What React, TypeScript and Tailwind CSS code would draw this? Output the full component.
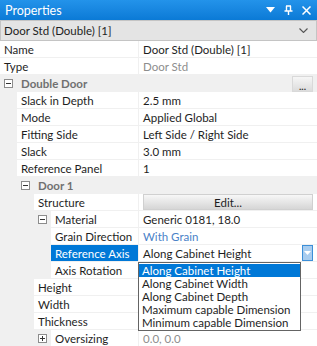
import React from "react";

type Row = {
  label: string;
  value?: string;
  indent: number; // grey margin width in px
  box?: "minus" | "plus";
  kind?: "category" | "selected" | "edit";
  valueTone?: "muted" | "link";
};

const rows: Row[] = [
  { label: "Name", value: "Door Std (Double) [1]", indent: 0 },
  { label: "Type", value: "Door Std", indent: 0, valueTone: "muted" },
  { label: "Double Door", indent: 0, box: "minus", kind: "category" },
  { label: "Slack in Depth", value: "2.5 mm", indent: 17 },
  { label: "Mode", value: "Applied Global", indent: 17 },
  { label: "Fitting Side", value: "Left Side / Right Side", indent: 17 },
  { label: "Slack", value: "3.0 mm", indent: 17 },
  { label: "Reference Panel", value: "1", indent: 17 },
  { label: "Door 1", indent: 17, box: "minus", kind: "category" },
  { label: "Structure", indent: 34, kind: "edit" },
  { label: "Material", value: "Generic 0181, 18.0", indent: 51, box: "minus" },
  { label: "Grain Direction", value: "With Grain", indent: 51, valueTone: "link" },
  { label: "Reference Axis", value: "Along Cabinet Height", indent: 51, kind: "selected" },
  { label: "Axis Rotation", value: "", indent: 51 },
  { label: "Height", value: "", indent: 34 },
  { label: "Width", value: "", indent: 34 },
  { label: "Thickness", value: "", indent: 34 },
  { label: "Oversizing", value: "0.0, 0.0", indent: 51, box: "plus", valueTone: "muted" },
];

const options = [
  "Along Cabinet Height",
  "Along Cabinet Width",
  "Along Cabinet Depth",
  "Maximum capable Dimension",
  "Minimum capable Dimension",
];

function ToggleBox({ type }: { type: "minus" | "plus" }) {
  return (
    <span className="relative flex h-[9px] w-[9px] items-center justify-center border border-[#8c8c8c] bg-white">
      <span className="absolute h-px w-[5px] bg-[#333]" />
      {type === "plus" && <span className="absolute h-[5px] w-px bg-[#333]" />}
    </span>
  );
}

function PropRow({ row }: { row: Row }) {
  if (row.kind === "category") {
    return (
      <div className="flex h-[17px] items-center bg-[#f0f0f0]">
        <div className="flex w-[17px] shrink-0 justify-center" style={{ marginLeft: row.indent }}>
          <ToggleBox type={row.box!} />
        </div>
        <span className="pl-1 font-bold text-[#707070]">{row.label}</span>
        {row.label === "Double Door" && (
          <div className="ml-auto mr-[4px] flex h-[16px] w-[21px] items-end justify-center border border-[#d9d9d9] bg-gradient-to-b from-[#f6f6f6] to-[#dcdcdc] pb-[1px] text-[10px] leading-[8px] font-bold text-[#333]">
            ...
          </div>
        )}
      </div>
    );
  }

  const selected = row.kind === "selected";
  const labelWidth = 138 - row.indent;

  return (
    <div className="flex h-[17px] bg-[#f0f0f0]">
      <div className="flex shrink-0 items-center justify-end" style={{ width: row.indent }}>
        {row.box && (
          <div className="flex w-[17px] justify-center">
            <ToggleBox type={row.box} />
          </div>
        )}
      </div>
      <div
        className={`flex shrink-0 items-center overflow-hidden border-b border-[#f0f0f0] pl-1 ${
          selected ? "bg-[#0078d7] text-white" : "bg-white text-[#1e1e1e]"
        }`}
        style={{ width: labelWidth }}
      >
        {row.label}
      </div>
      <div className="w-px shrink-0 bg-[#f0f0f0]" />
      <div className="flex min-w-0 flex-1 items-center border-b border-[#f0f0f0] bg-white pl-1">
        {row.kind === "edit" ? (
          <div className="mr-[4px] flex h-[16px] flex-1 items-center justify-center border border-[#d0d0d0] bg-gradient-to-b from-[#f7f7f7] to-[#d6d6d6] text-[#1e1e1e]">
            Edit...
          </div>
        ) : (
          <span
            className={
              row.valueTone === "muted"
                ? "text-[#8d8d8d]"
                : row.valueTone === "link"
                ? "text-[#4a82c8]"
                : "text-[#1e1e1e]"
            }
          >
            {row.value}
          </span>
        )}
        {selected && (
          <div className="ml-auto mr-[4px] flex h-[16px] w-[11px] items-center justify-center border border-[#3c8fd8] bg-[#a9cdef]">
            <svg width="7" height="4" viewBox="0 0 7 4">
              <path d="M0 0h7L3.5 4z" fill="#fff" />
            </svg>
          </div>
        )}
      </div>
    </div>
  );
}

export default function App() {
  return (
    <div
      className="relative h-[346px] w-[317px] overflow-hidden whitespace-nowrap bg-white text-[11.5px] leading-[17px]"
      style={{ fontFamily: 'Lato, "Noto Sans", sans-serif' }}
    >
      {/* title bar */}
      <div className="flex h-[20px] items-center bg-gradient-to-b from-[#2393ea] to-[#0a7ad6] pl-[5px] pr-[6px] text-white">
        <span className="text-[12.5px]">Properties</span>
        <div className="ml-auto flex items-center gap-[9px]">
          <svg width="9" height="6" viewBox="0 0 9 6">
            <path d="M0 0h9L4.5 5.5z" fill="#fff" />
          </svg>
          <svg width="9" height="10" viewBox="0 0 9 10">
            <path d="M2 1h5M2.5 1v5M6.5 1v5M0.5 6h8M4.5 6v4" stroke="#fff" strokeWidth="1.4" fill="none" />
          </svg>
          <svg width="9" height="9" viewBox="0 0 9 9">
            <path d="M0.5 0.5l8 8M8.5 0.5l-8 8" stroke="#fff" strokeWidth="1.5" />
          </svg>
        </div>
      </div>

      {/* object selector */}
      <div className="flex h-[21px] items-center border border-[#c4c4c4] bg-[#e4e4e4] pl-[3px] pr-[8px] text-[#1e1e1e]">
        <span>Door Std (Double) [1]</span>
        <svg className="ml-auto" width="9" height="5" viewBox="0 0 9 5">
          <path d="M0.5 0.5l4 4 4-4" stroke="#555" strokeWidth="1.1" fill="none" />
        </svg>
      </div>

      {/* grid */}
      <div className="flex flex-col">
        {rows.map((r) => (
          <PropRow key={r.label} row={r} />
        ))}
      </div>

      {/* open dropdown */}
      <div className="absolute left-[138px] top-[262px] w-[163px] border border-[#646464] bg-white py-px text-[11.5px] leading-[13px] text-[#1e1e1e]">
        {options.map((o, i) => (
          <div key={o} className={`pl-[3px] ${i === 0 ? "bg-[#0078d7] text-white" : ""}`}>
            {o}
          </div>
        ))}
      </div>
    </div>
  );
}
